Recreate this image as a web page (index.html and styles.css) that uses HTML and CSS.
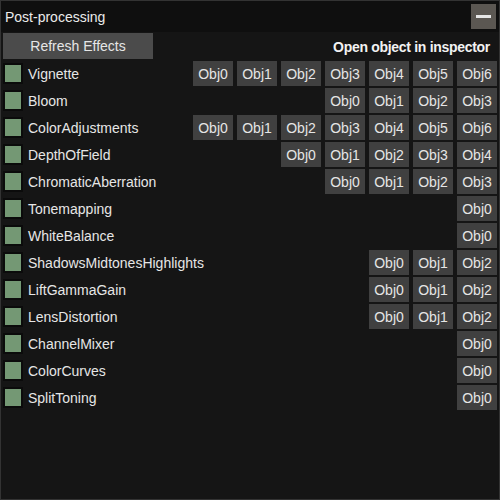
FILE: index.html
```html
<!DOCTYPE html>
<html>
<head>
<meta charset="utf-8">
<link rel="stylesheet" href="styles.css">
</head>
<body>
<div class="window">
  <div class="titlebar">
    <span class="title">Post-processing</span>
    <div class="collapse"><span class="dash"></span></div>
  </div>
  <div class="content">
    <div class="toprow">
      <div class="btn refresh">Refresh Effects</div>
      <div class="hint">Open object in inspector</div>
    </div>
    <div class="rows">
      <div class="row"><span class="check"></span><span class="label">Vignette</span><div class="objs"><span class="obj">Obj0</span><span class="obj">Obj1</span><span class="obj">Obj2</span><span class="obj">Obj3</span><span class="obj">Obj4</span><span class="obj">Obj5</span><span class="obj">Obj6</span></div></div>
      <div class="row"><span class="check"></span><span class="label">Bloom</span><div class="objs"><span class="obj">Obj0</span><span class="obj">Obj1</span><span class="obj">Obj2</span><span class="obj">Obj3</span></div></div>
      <div class="row"><span class="check"></span><span class="label">ColorAdjustments</span><div class="objs"><span class="obj">Obj0</span><span class="obj">Obj1</span><span class="obj">Obj2</span><span class="obj">Obj3</span><span class="obj">Obj4</span><span class="obj">Obj5</span><span class="obj">Obj6</span></div></div>
      <div class="row"><span class="check"></span><span class="label">DepthOfField</span><div class="objs"><span class="obj">Obj0</span><span class="obj">Obj1</span><span class="obj">Obj2</span><span class="obj">Obj3</span><span class="obj">Obj4</span></div></div>
      <div class="row"><span class="check"></span><span class="label">ChromaticAberration</span><div class="objs"><span class="obj">Obj0</span><span class="obj">Obj1</span><span class="obj">Obj2</span><span class="obj">Obj3</span></div></div>
      <div class="row"><span class="check"></span><span class="label">Tonemapping</span><div class="objs"><span class="obj">Obj0</span></div></div>
      <div class="row"><span class="check"></span><span class="label">WhiteBalance</span><div class="objs"><span class="obj">Obj0</span></div></div>
      <div class="row"><span class="check"></span><span class="label">ShadowsMidtonesHighlights</span><div class="objs"><span class="obj">Obj0</span><span class="obj">Obj1</span><span class="obj">Obj2</span></div></div>
      <div class="row"><span class="check"></span><span class="label">LiftGammaGain</span><div class="objs"><span class="obj">Obj0</span><span class="obj">Obj1</span><span class="obj">Obj2</span></div></div>
      <div class="row"><span class="check"></span><span class="label">LensDistortion</span><div class="objs"><span class="obj">Obj0</span><span class="obj">Obj1</span><span class="obj">Obj2</span></div></div>
      <div class="row"><span class="check"></span><span class="label">ChannelMixer</span><div class="objs"><span class="obj">Obj0</span></div></div>
      <div class="row"><span class="check"></span><span class="label">ColorCurves</span><div class="objs"><span class="obj">Obj0</span></div></div>
      <div class="row"><span class="check"></span><span class="label">SplitToning</span><div class="objs"><span class="obj">Obj0</span></div></div>
    </div>
  </div>
</div>
</body>
</html>
```

FILE: styles.css
```css
html, body {
  margin: 0;
  padding: 0;
  background: #151515;
}
.window {
  box-sizing: border-box;
  width: 500px;
  height: 500px;
  border: 1px solid #333333;
  background: #151515;
  font-family: "Liberation Sans", Arial, sans-serif;
  font-size: 14px;
  color: #e6e6e6;
  display: flex;
  flex-direction: column;
}
.titlebar {
  height: 31px;
  background: #0f0f0f;
  display: flex;
  align-items: center;
  justify-content: space-between;
  padding-left: 4px;
  padding-right: 3px;
}
.title {
  color: #ebebeb;
}
.collapse {
  width: 25px;
  height: 25px;
  background: #5b5752;
  display: flex;
  align-items: center;
  justify-content: center;
}
.dash {
  width: 15px;
  height: 3px;
  background: #e6e6e6;
}
.content {
  padding: 1px 2px 0 2px;
  display: flex;
  flex-direction: column;
  gap: 2px;
}
.toprow {
  display: flex;
  align-items: center;
  justify-content: space-between;
  height: 26px;
}
.btn {
  background: #4b4b4b;
  display: flex;
  align-items: center;
  justify-content: center;
}
.refresh {
  width: 150px;
  height: 26px;
}
.hint {
  color: #f2f2f2;
  font-weight: bold;
  letter-spacing: -0.3px;
  margin-right: 7px;
  padding-top: 2px;
}
.rows {
  display: flex;
  flex-direction: column;
  gap: 2px;
}
.row {
  display: flex;
  align-items: center;
  height: 25px;
}
.check {
  box-sizing: border-box;
  width: 20px;
  height: 21px;
  border: 2px solid #0b0b0b;
  background: #749874;
}
.label {
  margin-left: 5px;
}
.objs {
  margin-left: auto;
  display: flex;
  gap: 4px;
}
.obj {
  width: 40px;
  height: 25px;
  background: #404040;
  display: flex;
  align-items: center;
  justify-content: center;
}
```
